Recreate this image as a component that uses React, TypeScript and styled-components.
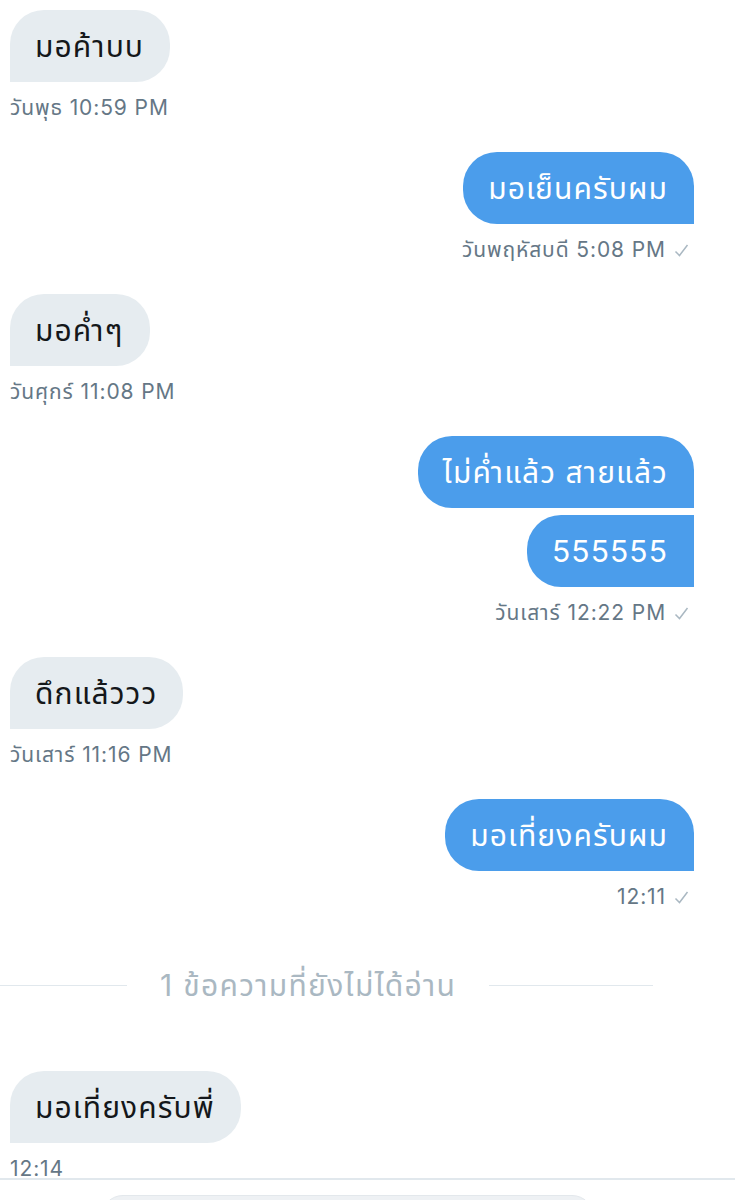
import React from "react";
import styled, { createGlobalStyle } from "styled-components";

const Global = createGlobalStyle`
  html, body { margin: 0; padding: 0; background: #ffffff; }
  body {
    font-family: Inter, "Noto Sans", "Noto Sans Thai", "DejaVu Sans", sans-serif;
    -webkit-font-smoothing: antialiased;
  }
`;

const Screen = styled.div`
  position: relative;
  width: 735px;
  height: 1200px;
  overflow: hidden;
  box-sizing: border-box;
  padding: 10px 41px 0 10px;
  display: flex;
  flex-direction: column;
`;

const Group = styled.div<{ $out?: boolean; $after?: number }>`
  display: flex;
  flex-direction: column;
  align-items: ${(p) => (p.$out ? "flex-end" : "flex-start")};
  gap: 7px;
  margin-bottom: ${(p) => p.$after ?? 32}px;
`;

type Shape = "single" | "first" | "last";

const Bubble = styled.div<{ $out?: boolean; $shape?: Shape }>`
  box-sizing: border-box;
  height: 72px;
  padding: 0 26px 0 25px;
  display: flex;
  align-items: center;
  font-size: 30px;
  line-height: 36px;
  letter-spacing: 1.1px;
  white-space: nowrap;
  background: ${(p) => (p.$out ? "#4b9deb" : "#e6ecf0")};
  color: ${(p) => (p.$out ? "#ffffff" : "#14171a")};
  border-radius: ${(p) => {
    const r = "34px";
    if (!p.$out) return `${r} ${r} ${r} 0`;
    if (p.$shape === "last") return `${r} 0 0 ${r}`;
    return `${r} ${r} 0 ${r}`;
  }};
`;

const Meta = styled.div<{ $out?: boolean }>`
  display: flex;
  align-items: center;
  gap: 8px;
  height: 24px;
  margin-top: 7px;
  padding-right: ${(p) => (p.$out ? 5 : 0)}px;
  font-size: 21px;
  letter-spacing: 0.9px;
  line-height: 24px;
  color: #657786;
  white-space: nowrap;
`;

const Check = styled.svg`
  width: 15px;
  height: 15px;
  flex: none;
`;

const Divider = styled.div`
  display: flex;
  align-items: center;
  width: 653px;
  height: 40px;
  margin: 24px 0 66px -10px;
  gap: 33px;
`;

const Rule = styled.div<{ $w?: number }>`
  height: 1px;
  background: #e1e8ed;
  ${(p) => (p.$w ? `width: ${p.$w}px; flex: none;` : "flex: 1;")}
`;

const DividerText = styled.span`
  font-size: 30px;
  letter-spacing: 1.3px;
  line-height: 40px;
  color: #aab8c2;
  white-space: nowrap;
`;

const Composer = styled.div`
  position: absolute;
  left: 0;
  right: 0;
  top: 1178px;
  bottom: 0;
  background: #ffffff;
  border-top: 2px solid #e1e8ed;
  padding: 15px 0 0 101px;
`;

const Input = styled.div`
  width: 493px;
  height: 44px;
  border-radius: 22px;
  background: #eef1f4;
  border: 1px solid #e3e8ec;
  box-sizing: border-box;
`;

const Tick = () => (
  <Check viewBox="0 0 15 15">
    <polyline points="1.5,8.5 5.5,12.5 13.5,2" fill="none" stroke="#aab8c2" strokeWidth="1.5" />
  </Check>
);

type Msg = { out?: boolean; texts: string[]; time: string; after?: number };

const messages: Msg[] = [
  { texts: ["มอค้าบบ"], time: "วันพุธ 10:59 PM" },
  { out: true, texts: ["มอเย็นครับผม"], time: "วันพฤหัสบดี 5:08 PM" },
  { texts: ["มอค่ำๆ"], time: "วันศุกร์ 11:08 PM" },
  { out: true, texts: ["ไม่ค่ำแล้ว สายแล้ว", "555555"], time: "วันเสาร์ 12:22 PM" },
  { texts: ["ดึกแล้ววว"], time: "วันเสาร์ 11:16 PM" },
  { out: true, texts: ["มอเที่ยงครับผม"], time: "12:11" },
];

const MessageGroup = ({ m }: { m: Msg }) => (
  <Group $out={m.out} $after={m.after}>
    {m.texts.map((t, i) => (
      <Bubble
        key={i}
        $out={m.out}
        $shape={m.texts.length > 1 ? (i === m.texts.length - 1 ? "last" : "first") : "single"}
      >
        {t}
      </Bubble>
    ))}
    <Meta $out={m.out}>
      {m.time}
      {m.out && <Tick />}
    </Meta>
  </Group>
);

export default function App() {
  return (
    <>
      <Global />
      <Screen>
        {messages.map((m, i) => (
          <MessageGroup key={i} m={m} />
        ))}
        <Divider>
          <Rule $w={127} />
          <DividerText>1 ข้อความที่ยังไม่ได้อ่าน</DividerText>
          <Rule />
        </Divider>
        <MessageGroup m={{ texts: ["มอเที่ยงครับพี่"], time: "12:14" }} />
        <Composer>
          <Input />
        </Composer>
      </Screen>
    </>
  );
}
